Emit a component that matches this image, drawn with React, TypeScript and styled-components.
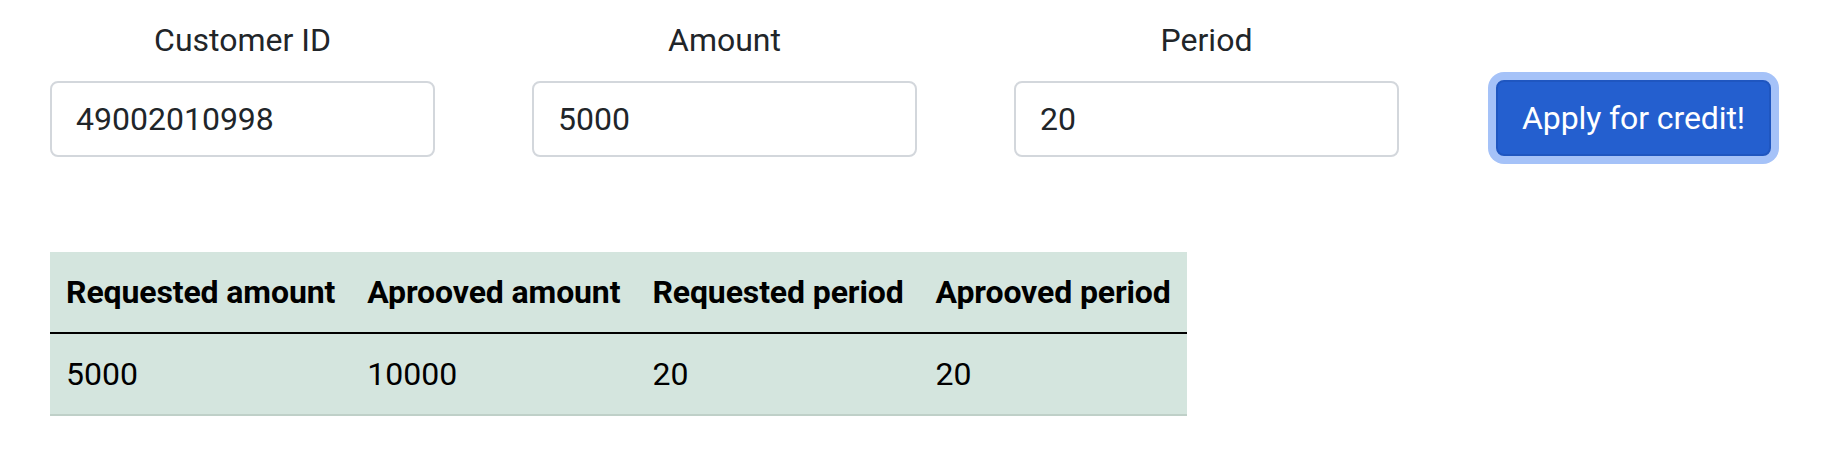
import styled, { createGlobalStyle } from "styled-components";

const GlobalStyle = createGlobalStyle`
    body {
        margin: 0;
        background: #ffffff;
        font-family: Roboto, "Liberation Sans", sans-serif;
        color: #212529;
    }
    * {
        box-sizing: border-box;
    }
`;

const fields = [
    { label: "Customer ID", value: "49002010998" },
    { label: "Amount", value: "5000" },
    { label: "Period", value: "20" },
];

const columns = ["Requested amount", "Aprooved amount", "Requested period", "Aprooved period"];
const rows = [["5000", "10000", "20", "20"]];

export default function App() {
    return (
        <Page>
            <GlobalStyle />
            <FormRow>
                {fields.map((f) => (
                    <Field key={f.label}>
                        <Label>{f.label}</Label>
                        <Input defaultValue={f.value} />
                    </Field>
                ))}
                <ButtonCell>
                    <ApplyButton>Apply for credit!</ApplyButton>
                </ButtonCell>
            </FormRow>
            <Table>
                <thead>
                    <tr>
                        {columns.map((c) => (
                            <Th key={c}>{c}</Th>
                        ))}
                    </tr>
                </thead>
                <tbody>
                    {rows.map((r, i) => (
                        <tr key={i}>
                            {r.map((v, j) => (
                                <Td key={j}>{v}</Td>
                            ))}
                        </tr>
                    ))}
                </tbody>
            </Table>
        </Page>
    );
}

const Page = styled.div`
    padding: 16px 0 0 50px;
`;

const FormRow = styled.div`
    display: flex;
    gap: 97px;
`;

const Field = styled.div`
    width: 385px;
    display: flex;
    flex-direction: column;
    align-items: center;
`;

const Label = styled.label`
    font-size: 32px;
    line-height: 48px;
    margin-bottom: 17px;
`;

const Input = styled.input`
    width: 100%;
    height: 76px;
    padding: 12px 24px;
    font-family: inherit;
    font-size: 32px;
    line-height: 48px;
    color: #212529;
    background: #fff;
    border: 2px solid #d3d7dc;
    border-radius: 8px;
    outline: none;
`;

const ButtonCell = styled.div`
    padding-top: 64px;
`;

const ApplyButton = styled.button`
    height: 76px;
    padding: 12px 24px;
    font-family: inherit;
    font-size: 32px;
    line-height: 48px;
    letter-spacing: -0.1px;
    color: #fff;
    background: #245fcf;
    border: 2px solid #1f56c0;
    border-radius: 8px;
    box-shadow: 0 0 0 8px #a5c2f8;
    cursor: pointer;
`;

const Table = styled.table`
    margin-top: 95px;
    border-collapse: collapse;
    background: #d4e5de;
    font-size: 32px;
    line-height: 48px;
    color: #000;
`;

const Th = styled.th`
    padding: 16px;
    text-align: left;
    font-weight: 700;
    letter-spacing: -0.12px;
    white-space: nowrap;
    border-bottom: 2px solid #000;
`;

const Td = styled.td`
    padding: 16px;
    border-bottom: 2px solid #bfd0c8;
`;
